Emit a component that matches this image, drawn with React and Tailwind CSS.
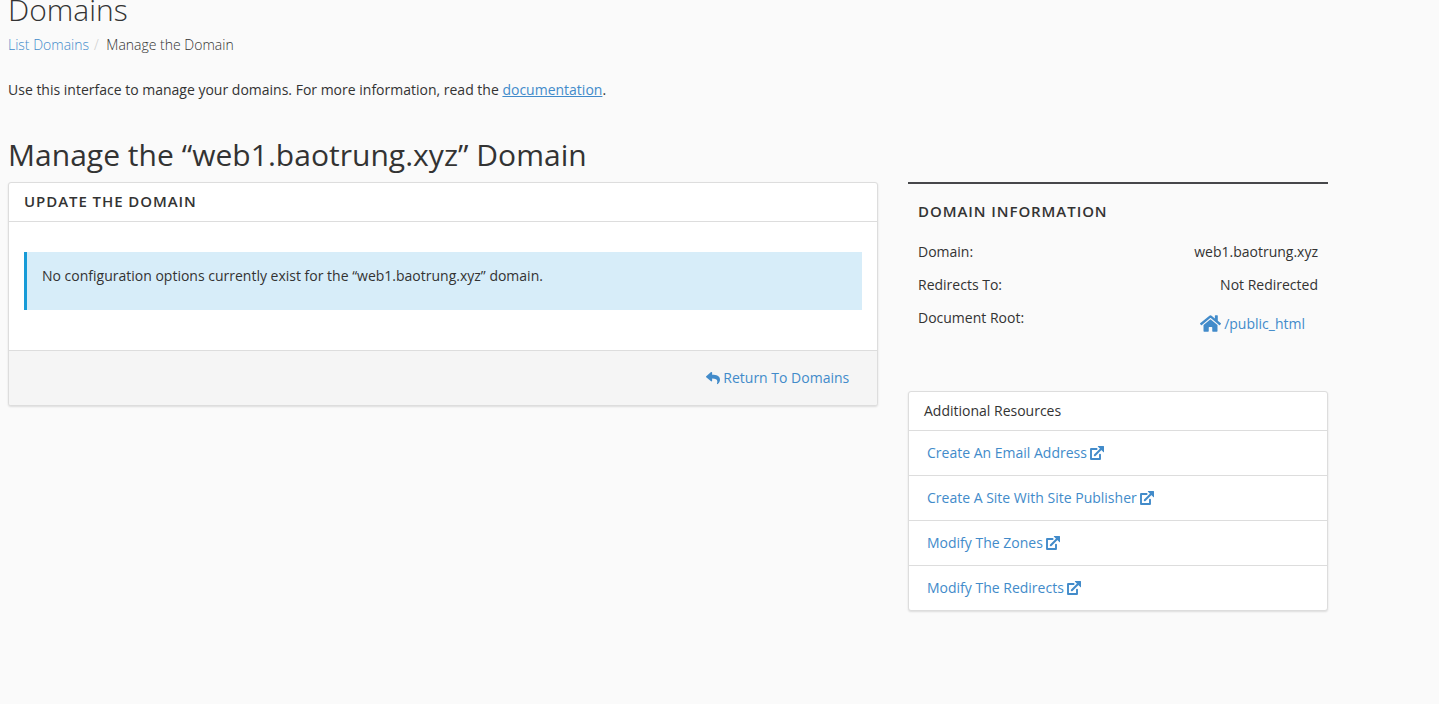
import { FaReply, FaHome } from "react-icons/fa";

const resources = [
  "Create An Email Address",
  "Create A Site With Site Publisher",
  "Modify The Zones",
  "Modify The Redirects",
];

function ExternalLinkIcon() {
  return (
    <svg viewBox="0 0 14 14" className="size-[14px] shrink-0" fill="none" stroke="currentColor" aria-hidden="true">
      <path d="M6.6 3H1V13H10V8.6" strokeWidth="1.9" strokeLinejoin="round" strokeLinecap="round" />
      <path d="M4.8 9.3L11.8 2.3" strokeWidth="2" strokeLinecap="round" />
      <path d="M8.2 0H13.5Q14 0 14 .5V5.8Q14 6.7 13.3 6L8 .8Q7.4 0 8.2 0Z" fill="currentColor" stroke="none" />
    </svg>
  );
}

function UpdatePanel() {
  return (
    <section className="h-[224px] w-[870px] shrink-0 overflow-hidden rounded-[3px] border border-[#ddd] bg-white shadow-[0_1px_2px_rgba(0,0,0,0.12)]">
      <h3 className="flex h-[39px] items-center border-b border-[#ddd] px-[15px] pb-[2px] text-[15px] font-semibold uppercase leading-5 tracking-[0.93px]">
        Update the Domain
      </h3>
      <div className="h-[128px] px-[15px] pt-[30px]">
        <div className="h-[58px] border-l-[3px] border-[#179bd7] bg-[#d7edf9] px-[15px] pt-[14px]">
          No configuration options currently exist for the “web1.baotrung.xyz” domain.
        </div>
      </div>
      <div className="flex h-[55px] items-center justify-end border-t border-[#ddd] bg-[#f5f5f5] pr-[27.8px]">
        <a className="flex items-center gap-[3px] text-[#428bca]" href="#">
          <FaReply className="size-[14px]" />
          Return To Domains
        </a>
      </div>
    </section>
  );
}

function DomainInformation() {
  return (
    <section className="h-[209px] border-t-2 border-[#46474a] px-[10px] pt-[17px]">
      <h3 className="text-[15px] font-semibold uppercase leading-5 tracking-[0.93px]">Domain Information</h3>
      <dl className="mt-[21px] flex flex-col gap-[13px]">
        <div className="flex justify-between">
          <dt>Domain:</dt>
          <dd>web1.baotrung.xyz</dd>
        </div>
        <div className="flex justify-between">
          <dt>Redirects To:</dt>
          <dd>Not Redirected</dd>
        </div>
        <div className="flex justify-between">
          <dt>Document Root:</dt>
          <dd className="-mt-px pr-[13px] pt-[6px]">
            <a className="flex items-center gap-[3px] text-[#428bca]" href="#">
              <FaHome className="h-[21px] w-[21px]" />
              /public_html
            </a>
          </dd>
        </div>
      </dl>
    </section>
  );
}

export default function App() {
  return (
    <main className="h-[704px] overflow-hidden bg-[#fafafa] pl-2 font-['Open_Sans',sans-serif] text-[14px] leading-5 text-[#333]">
      <h1 className="-mt-[10px] h-[45px] text-[30px] font-light leading-10">Domains</h1>
      <nav className="flex font-light">
        <a className="text-[#428bca]" href="#">List Domains</a>
        <span className="pl-[5px] pr-[7.5px] text-[#ccc]">/</span>
        <span className="text-[#333]">Manage the Domain</span>
      </nav>
      <p className="mt-[25px]">
        Use this interface to manage your domains. For more information, read the{" "}
        <a className="text-[#428bca] underline" href="#">documentation</a>.
      </p>
      <h2 className="mt-[35px] h-[47px] text-[30px] leading-10 tracking-[0.03px]">Manage the “web1.baotrung.xyz” Domain</h2>
      <div className="flex gap-[30px]">
        <UpdatePanel />
        <aside className="w-[420px]">
          <DomainInformation />
          <section className="h-[220px] overflow-hidden rounded-[3px] border border-[#ddd] bg-white shadow-[0_1px_2px_rgba(0,0,0,0.12)]">
            <h3 className="flex h-[38px] items-center px-[15px]">Additional Resources</h3>
            <ul>
              {resources.map((label) => (
                <li key={label} className="flex h-[45px] items-center border-t border-[#ddd] px-[18px]">
                  <a className="flex items-center gap-[3.5px] text-[#428bca]" href="#">
                    {label}
                    <ExternalLinkIcon />
                  </a>
                </li>
              ))}
            </ul>
          </section>
        </aside>
      </div>
    </main>
  );
}
